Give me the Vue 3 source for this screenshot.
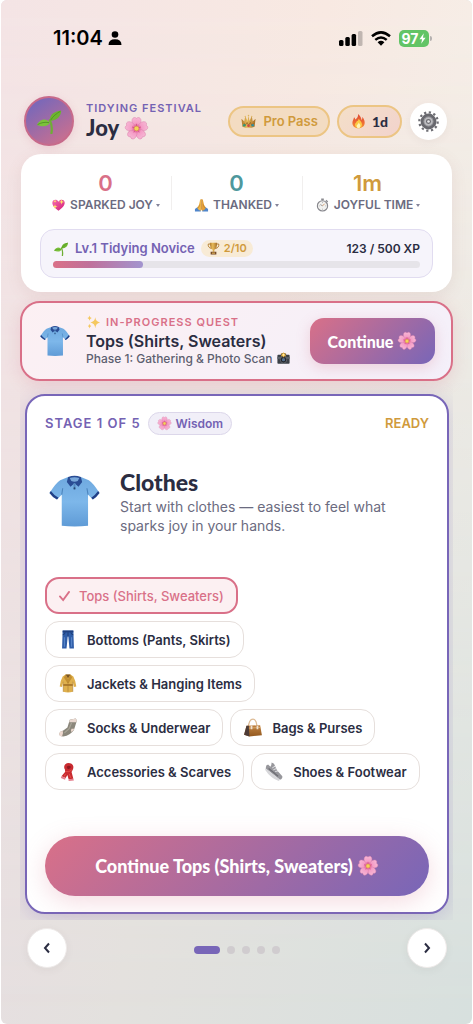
<script setup>
import { computed, ref } from 'vue'

const stats = [
  { value: '0', label: 'SPARKED JOY', icon: 'heart', tone: 'rose' },
  { value: '0', label: 'THANKED', icon: 'hands', tone: 'teal' },
  { value: '1m', label: 'JOYFUL TIME', icon: 'watch', tone: 'gold' },
]

const xp = 123
const xpGoal = 500
const xpWidth = computed(() => `${(xp / xpGoal) * 100}%`)

const items = [
  { label: 'Tops (Shirts, Sweaters)', icon: null },
  { label: 'Bottoms (Pants, Skirts)', icon: 'jeans' },
  { label: 'Jackets & Hanging Items', icon: 'coat' },
  { label: 'Socks & Underwear', icon: 'socks' },
  { label: 'Bags & Purses', icon: 'bag' },
  { label: 'Accessories & Scarves', icon: 'scarf' },
  { label: 'Shoes & Footwear', icon: 'shoe' },
]
const selected = ref(0)
const stage = ref(1)
</script>

<template>
  <div class="page">
    <svg class="sprite" aria-hidden="true">
      <defs>
        <radialGradient id="petal" gradientUnits="userSpaceOnUse" cx="16" cy="16" r="15">
          <stop offset="0.15" stop-color="#e0558f" />
          <stop offset="0.45" stop-color="#f49cc6" />
          <stop offset="1" stop-color="#f7b9d6" />
        </radialGradient>
        <linearGradient id="shirt" x1="0" y1="0" x2="0" y2="1">
          <stop offset="0" stop-color="#6fa9df" />
          <stop offset="0.5" stop-color="#7db7ea" />
          <stop offset="1" stop-color="#5f9bd6" />
        </linearGradient>
        <linearGradient id="heartpink" x1="0" y1="0" x2="1" y2="1">
          <stop offset="0" stop-color="#f46bb0" />
          <stop offset="1" stop-color="#d41f78" />
        </linearGradient>
        <linearGradient id="flame" x1="0" y1="0" x2="0" y2="1">
          <stop offset="0" stop-color="#dd4b35" />
          <stop offset="0.6" stop-color="#ee6a35" />
          <stop offset="1" stop-color="#f49a35" />
        </linearGradient>
        <linearGradient id="goldtone" x1="0" y1="0" x2="1" y2="0">
          <stop offset="0" stop-color="#b07a2c" />
          <stop offset="0.4" stop-color="#e8bb58" />
          <stop offset="1" stop-color="#a56e28" />
        </linearGradient>
        <linearGradient id="leather" x1="0" y1="0" x2="0" y2="1">
          <stop offset="0" stop-color="#c28444" />
          <stop offset="1" stop-color="#93591f" />
        </linearGradient>
      </defs>

      <symbol id="i-flower" viewBox="0 0 32 32">
        <g fill="url(#petal)" stroke="#dc7fab" stroke-width="0.6">
          <path d="M16 16C11.500 12.500 9.500 8 10.500 4.500C11.500 1.500 14 1 16 3C18 1 20.500 1.500 21.500 4.500C22.500 8 20.500 12.500 16 16Z" />
          <path transform="rotate(72 16 16)" d="M16 16C11.500 12.500 9.500 8 10.500 4.500C11.500 1.500 14 1 16 3C18 1 20.500 1.500 21.500 4.500C22.500 8 20.500 12.500 16 16Z" />
          <path transform="rotate(144 16 16)" d="M16 16C11.500 12.500 9.500 8 10.500 4.500C11.500 1.500 14 1 16 3C18 1 20.500 1.500 21.500 4.500C22.500 8 20.500 12.500 16 16Z" />
          <path transform="rotate(216 16 16)" d="M16 16C11.500 12.500 9.500 8 10.500 4.500C11.500 1.500 14 1 16 3C18 1 20.500 1.500 21.500 4.500C22.500 8 20.500 12.500 16 16Z" />
          <path transform="rotate(288 16 16)" d="M16 16C11.500 12.500 9.500 8 10.500 4.500C11.500 1.500 14 1 16 3C18 1 20.500 1.500 21.500 4.500C22.500 8 20.500 12.500 16 16Z" />
        </g>
        <path d="M16 10v6M10.300 14.100l5.700 1.900M12.500 20.900l3.500 -4.900M19.500 20.900l-3.500 -4.900M21.700 14.100l-5.700 1.900" stroke="#cf4a84" stroke-width="0.900" />
        <circle cx="16" cy="16" r="3" fill="#f3d35a" stroke="#d99a4a" stroke-width="0.800" />
      </symbol>

      <symbol id="i-sprout" viewBox="0 0 32 32">
        <path d="M19 31C20 25 19.500 20 17 15" fill="none" stroke="#6fae35" stroke-width="2.800" stroke-linecap="round" />
        <path d="M17.500 16C16 9 22 4 31 3.500C30.500 10 27 15 17.500 16Z" fill="#6db52f" />
        <path d="M17 18.500C14 12.500 6 12 1 20.500C7 23.500 14 23.500 17 18.500Z" fill="#7cc23c" />
        <path d="M18 15C21 10 25 7 30 4M16 18C11 17 6 18 2 20.500" fill="none" stroke="#4c8f22" stroke-width="1" />
      </symbol>

      <symbol id="i-shirt" viewBox="0 0 32 32">
        <path d="M12 1L7 3Q4.500 4.500 0.300 11Q2 13.500 5 15L8 12V31.500Q16 32.500 24.500 31.500V12L27.500 15Q30 13.500 31.700 11Q27.500 4.500 25 3L20 1Q16 3 12 1Z" fill="url(#shirt)" />
        <path d="M0.300 11L1.200 9.700Q3 12.300 6 14L5 15Q2 13.500 0.300 11ZM31.700 11L30.800 9.700Q29 12.300 26.500 14L27.500 15Q30 13.500 31.700 11Z" fill="#213f86" />
        <path d="M8 12L8.600 8M24.500 12L23.800 8" stroke="#4c85be" stroke-width="0.700" />
        <path d="M12 1Q16 -0.800 20 1L20.800 4L18.500 7L16 4.800L13.500 7L11.200 4Z" fill="#294c94" />
        <path d="M13 1.500Q16 0.600 19 1.500L18 3.500Q16 4.300 14 3.500Z" fill="#79a8da" />
        <path d="M16 4.800V9" stroke="#5489c0" stroke-width="1.200" />
        <circle cx="16" cy="8" r="0.600" fill="#26466f" />
      </symbol>

      <symbol id="i-heart" viewBox="0 0 32 32">
        <path d="M16 29C8 23 1 17 2 9.500C3.500 3 12 2 16 8.500C20 2 28.500 3 30 9.500C31 17 24 23 16 29Z" fill="url(#heartpink)" />
        <g fill="#ffe16b">
          <path d="M23 3L24.500 7.500L29 9L24.500 10.500L23 15L21.500 10.500L17 9L21.500 7.500Z" />
          <path d="M8 14L9.500 18L13.500 19.500L9.500 21L8 25L6.500 21L2.500 19.500L6.500 18Z" />
          <path d="M8 4L9 6.500L11.500 7.500L9 8.500L8 11L7 8.500L4.500 7.500L7 6.500Z" />
        </g>
      </symbol>

      <symbol id="i-hands" viewBox="0 0 32 32">
        <path d="M1 25L8 20L15 29L14 31H1ZM31 25L24 20L17 29L18 31H31Z" fill="#4f86cc" />
        <path d="M15.500 2C13 2 12.500 4 12 8L10 16L6 22Q9 29 15 29L16 24Z" fill="#eeb549" />
        <path d="M16.500 2C19 2 19.500 4 20 8L22 16L26 22Q23 29 17 29L16 24Z" fill="#e3a13b" />
        <path d="M16 3V27M12 15Q11 20 8 23M20 15Q21 20 24 23" fill="none" stroke="#b97522" stroke-width="1.200" />
      </symbol>

      <symbol id="i-watch" viewBox="0 0 32 32">
        <path d="M13 1H19V5H13ZM25 4L29 8L27 10L23 6Z" fill="#8b8b90" />
        <circle cx="16" cy="18" r="13" fill="#85858b" />
        <circle cx="16" cy="18" r="10.500" fill="#f2f2f0" />
        <path d="M16 9.500V11.500M16 24.500V26.500M7.500 18H9.500M22.500 18H24.500" stroke="#777" stroke-width="1.200" />
        <path d="M16 18L21 13" stroke="#c8752f" stroke-width="1.500" />
        <path d="M16 18L11 15" stroke="#55555a" stroke-width="1.300" />
      </symbol>

      <symbol id="i-trophy" viewBox="0 0 32 32">
        <path d="M8 5H3Q2 14 11 16M24 5H29Q30 14 21 16" fill="none" stroke="#b07a2c" stroke-width="2.200" />
        <path d="M7 2H25Q25 17 18 19V24H14V19Q7 17 7 2Z" fill="url(#goldtone)" />
        <path d="M9 24H23V31H9Z" fill="#6f4324" />
        <path d="M12 26H20V29H12Z" fill="#dcb158" />
      </symbol>

      <symbol id="i-crown" viewBox="0 0 32 32">
        <path d="M3 27L1 10L7 16L9 5L14 15L16 3L18 15L23 5L25 16L31 10L29 27Q16 32 3 27Z" fill="url(#goldtone)" />
        <path d="M6 19L9 24L13 18L16 24L20 18L23 24L27 19" fill="none" stroke="#8a5a22" stroke-width="1.500" />
        <circle cx="16" cy="25" r="2.800" fill="#d24545" />
        <circle cx="7" cy="24" r="2.800" fill="#2f9a79" />
        <circle cx="25" cy="24" r="2.800" fill="#2f8fa0" />
        <circle cx="9" cy="5" r="1.500" fill="#dfb65c" />
        <circle cx="23" cy="5" r="1.500" fill="#dfb65c" />
        <circle cx="16" cy="3" r="1.600" fill="#dfb65c" />
      </symbol>

      <symbol id="i-fire" viewBox="0 0 32 32">
        <path d="M15 1C20 5 22 10 22.500 14C24 13 24.500 10 24 7C28 12 30 17 29 22C28 28 22 31.500 16 31.500C9 31.500 3 27 3 20C3 15 6 12 6.500 8C8 9 9 11 9 13C13 10 16 6 15 1Z" fill="url(#flame)" />
        <path d="M16 11C19 15 24 18 23.500 24C23 28.500 19.500 31 16 31C11.500 31 8.500 28 8.500 24C8.500 20 12 19 12.500 16C14.500 16 16 14 16 11Z" fill="#fbc944" />
        <path d="M16.500 19C18 22 20.500 23 20 27C19.500 29.500 18 31 16 31C13.500 31 12 29 12 26.500C12 24 15.500 23 16.500 19Z" fill="#fff4b8" />
      </symbol>

      <symbol id="i-gear" viewBox="0 0 32 32">
        <circle cx="16" cy="16" r="14" fill="none" stroke="#6f6f75" stroke-width="3.400" stroke-dasharray="3.400 3.930" />
        <circle cx="16" cy="16" r="9.800" fill="#9c9ca1" stroke="#68686e" stroke-width="4.500" />
        <circle cx="16" cy="16" r="7" fill="#bdbdc1" stroke="#85858a" stroke-width="1" />
        <circle cx="16" cy="16" r="3.800" fill="#6b6b70" />
        <circle cx="16" cy="16" r="2" fill="#e8e8ea" />
      </symbol>

      <symbol id="i-sparkles" viewBox="0 0 32 32">
        <g fill="#f5c860">
          <path d="M20 5Q21 15 31 17Q21 19 20 30Q19 19 9 17Q19 15 20 5Z" />
          <path d="M7 1Q7.500 6 12 7Q7.500 8 7 13Q6.500 8 2 7Q6.500 6 7 1Z" />
          <path d="M7 20Q7.500 24 11 25Q7.500 26 7 31Q6.500 26 3 25Q6.500 24 7 20Z" />
        </g>
      </symbol>

      <symbol id="i-camera" viewBox="0 0 32 32">
        <path d="M1 9Q1 7 3 7H9L11 3H21L23 7H29Q31 7 31 9V27Q31 29 29 29H3Q1 29 1 27Z" fill="#3b3f46" />
        <path d="M1 12H31V17H1Z" fill="#5b6068" />
        <circle cx="16" cy="19" r="8" fill="#23262b" stroke="#81868e" stroke-width="1.300" />
        <circle cx="16" cy="19" r="4" fill="#566e8c" />
        <path d="M16 0L18 4L23 3L20 7L23 11L18 10L16 14L14 10L9 11L12 7L9 3L14 4Z" fill="#f3b83f" />
        <circle cx="16" cy="7" r="2.200" fill="#fff2b5" />
      </symbol>

      <symbol id="i-jeans" viewBox="0 0 32 32">
        <path d="M7 1H25L26 31H18.500L16.500 11H15.500L13.500 31H6Z" fill="#2f5da8" />
        <path d="M7 1H25V4H7Z" fill="#1e3f7f" />
        <path d="M16 4V11M7 8Q11 8 11 4M25 8Q21 8 21 4" fill="none" stroke="#183469" stroke-width="1.200" />
        <path d="M10 12V28M22 12V28" stroke="#5583c7" stroke-width="2" />
      </symbol>

      <symbol id="i-coat" viewBox="0 0 32 32">
        <path d="M12 1H20L25 4Q29 11 30 21L26 22L24 13V30Q16 32 8 30V13L6 22L2 21Q3 11 7 4Z" fill="#dfb04d" />
        <path d="M12 1L16 9L20 1L23 6L17 15H15L9 6Z" fill="#c28f32" />
        <path d="M8 17H24V20H8Z" fill="#a8762a" />
        <path d="M16 13V30M8 13V30M24 13V30" stroke="#ab7c2e" stroke-width="1" />
        <path d="M12 1H20L16 7Z" fill="#7a5423" />
      </symbol>

      <symbol id="i-socks" viewBox="0 0 32 32">
        <path d="M19 3L29 1L31 4L26 20Q20 29 8 31Q1 31 1 26Q2 23 8 21L15 16Z" fill="#8b877b" />
        <path d="M19 3L29 1L31 4L30 7L18 7Z" fill="#e9d8d0" />
        <path d="M1 26Q2 23 7 21.500Q9 26 6 31Q1 31 1 26ZM27 18L22 24Q20 20 22 18Z" fill="#eed9d0" />
        <path d="M22 8L18 18L10 25" fill="none" stroke="#a8a497" stroke-width="2" />
      </symbol>

      <symbol id="i-bag" viewBox="0 0 32 32">
        <path d="M8 17Q9 2 16 2Q22 2 23 17" fill="none" stroke="#ddbb95" stroke-width="2.200" />
        <path d="M5 13L28 12L31 29L10 31L1 28Z" fill="url(#leather)" />
        <path d="M5 13L1 28L10 31L9 13Z" fill="#4c3b37" />
        <path d="M9 17L29 16" stroke="#e2b879" stroke-width="1.300" />
        <path d="M12 13H15V19H12ZM22 13H25V19H22Z" fill="#eee0d0" />
      </symbol>

      <symbol id="i-scarf" viewBox="0 0 32 32">
        <path d="M11 13Q8 8 11 4Q16 0 22 3Q27 7 24 13L22 17L25 28L17 29L15 22L12 27L5 24L11 17Z" fill="#c92b30" />
        <path d="M14 8Q17 5 21 8Q20 11 17 12Q13 11 14 8Z" fill="#8e1820" />
        <path d="M11 16Q18 18 23 13M12 20L9 25M18 20L21 27" fill="none" stroke="#e5534f" stroke-width="1.400" />
        <path d="M5 24L12 27L11 30L4 27ZM17 29L25 28L26 31L17 32Z" fill="#e47e8d" />
      </symbol>

      <symbol id="i-shoe" viewBox="0 0 32 32">
        <path d="M3 6L6 4L10 8Q12 5 12 1L16 3L21 14L30 24Q31 28 26 30L2 11Z" fill="#97979c" />
        <path d="M2 11L26 30L24 32Q10 27 1 13Z" fill="#d7d7da" />
        <path d="M13 10L18 7M15 13L20 11M18 16L23 15" stroke="#ececef" stroke-width="1.500" />
        <path d="M7 11L23 24" stroke="#6d6d73" stroke-width="2" />
      </symbol>
    </svg>

    <div class="statusbar">
      <span class="clock">11:04</span>
      <svg class="person" viewBox="0 0 14 14" aria-hidden="true">
        <circle cx="7" cy="3.500" r="3.300" />
        <path d="M0.500 14Q0.500 8.200 7 8.200Q13.500 8.200 13.500 14Z" />
      </svg>
      <svg class="signal" viewBox="0 0 24 15" aria-hidden="true">
        <rect x="0" y="9" width="4.500" height="6" rx="1.500" />
        <rect x="6.300" y="6" width="4.500" height="9" rx="1.500" />
        <rect x="12.600" y="3" width="4.500" height="12" rx="1.500" />
        <rect x="19" y="0" width="4.500" height="15" rx="1.500" opacity="0.22" />
      </svg>
      <svg class="wifi" viewBox="0 0 20 15" aria-hidden="true">
        <g fill="none" stroke="#000" stroke-width="2.500">
          <path d="M1 5.300Q10 -2.500 19 5.300" />
          <path d="M4.300 8.900Q10 4 15.700 8.900" />
        </g>
        <path d="M10 14.700L6.600 11.200Q10 8.500 13.400 11.200Z" />
      </svg>
      <span class="battery">97<svg viewBox="0 0 8 12" aria-hidden="true"><path d="M5.500 0L0.500 6.800H3.500L2.500 12L7.500 5H4.500Z" fill="#fff" /></svg></span>
    </div>

    <header class="topbar">
      <div class="avatar"><svg><use href="#i-sprout" /></svg></div>
      <div class="who">
        <span class="eyebrow">TIDYING FESTIVAL</span>
        <h1>Joy <svg><use href="#i-flower" /></svg></h1>
      </div>
      <button class="pill pro" type="button"><svg><use href="#i-crown" /></svg>Pro Pass</button>
      <button class="pill streak" type="button"><svg><use href="#i-fire" /></svg>1d</button>
      <button class="gear" type="button" aria-label="Settings"><svg><use href="#i-gear" /></svg></button>
    </header>

    <section class="stats">
      <div class="columns">
        <button v-for="s in stats" :key="s.label" type="button" class="stat">
          <span class="value" :class="s.tone">{{ s.value }}</span>
          <span class="label"><svg><use :href="`#i-${s.icon}`" /></svg>{{ s.label }}<i class="caret"></i></span>
        </button>
      </div>
      <div class="level">
        <div class="level-row">
          <svg><use href="#i-sprout" /></svg>
          <span class="level-name">Lv.1 Tidying Novice</span>
          <span class="trophies"><svg><use href="#i-trophy" /></svg>2/10</span>
          <span class="xp">{{ xp }} / {{ xpGoal }} XP</span>
        </div>
        <div class="track" role="progressbar" aria-label="Experience" :aria-valuenow="xp" :aria-valuemax="xpGoal">
          <div class="fill" :style="{ width: xpWidth }"></div>
        </div>
      </div>
    </section>

    <section class="quest">
      <svg class="quest-icon"><use href="#i-shirt" /></svg>
      <div class="quest-text">
        <span class="quest-eyebrow"><svg><use href="#i-sparkles" /></svg>IN-PROGRESS QUEST</span>
        <h2>Tops (Shirts, Sweaters)</h2>
        <p>Phase 1: Gathering &amp; Photo Scan <svg><use href="#i-camera" /></svg></p>
      </div>
      <button class="go" type="button">Continue<svg><use href="#i-flower" /></svg></button>
    </section>

    <main class="carousel">
      <article class="stage">
        <div class="stage-head">
          <span class="stage-no">STAGE 1 OF 5</span>
          <span class="wisdom"><svg><use href="#i-flower" /></svg>Wisdom</span>
          <span class="ready">READY</span>
        </div>
        <div class="intro">
          <svg><use href="#i-shirt" /></svg>
          <div>
            <h2>Clothes</h2>
            <p>Start with clothes — easiest to feel what sparks joy in your hands.</p>
          </div>
        </div>
        <div class="chips">
          <button
            v-for="(item, i) in items"
            :key="item.label"
            type="button"
            class="chip"
            :class="{ active: i === selected }"
            @click="selected = i"
          >
            <svg v-if="item.icon"><use :href="`#i-${item.icon}`" /></svg>
            <svg v-else class="check" viewBox="0 0 12 12"><path d="M1 6.500L4.500 10.500L11 1.500" /></svg>
            {{ item.label }}
          </button>
        </div>
        <button class="cta" type="button">Continue Tops (Shirts, Sweaters)<svg><use href="#i-flower" /></svg></button>
      </article>
    </main>

    <nav class="pager" aria-label="Stages">
      <button class="arrow" type="button" aria-label="Previous stage">
        <svg viewBox="0 0 8 12"><path d="M6 1.500L2 6L6 10.500" /></svg>
      </button>
      <div class="dots">
        <button
          v-for="n in 5"
          :key="n"
          type="button"
          class="dot"
          :class="{ on: n === stage }"
          :aria-label="`Stage ${n}`"
          @click="stage = n"
        ></button>
      </div>
      <button class="arrow" type="button" aria-label="Next stage">
        <svg viewBox="0 0 8 12"><path d="M2 1.500L6 6L2 10.500" /></svg>
      </button>
    </nav>
  </div>
</template>

<style>
body {
  background: #fff;
}
</style>

<style scoped>
.page,
.page * {
  box-sizing: border-box;
}
.page {
  position: relative;
  isolation: isolate;
  overflow: hidden;
  min-height: 100vh;
  margin: 0 1px;
  padding: 0 19px;
  border-radius: 6px;
  background: linear-gradient(100deg, #eadde3, #e3e1de 45%, #d7e0de);
  font-family: Inter, "Liberation Sans", sans-serif;
  color: #2b2d42;
}
.page::before {
  content: "";
  position: absolute;
  inset: 0;
  z-index: -1;
  background: linear-gradient(100deg, #f4e4e5, #f8e9e2 50%, #f4f2eb);
  mask-image: linear-gradient(#000, transparent);
}
.sprite {
  position: absolute;
  width: 0;
  height: 0;
}
svg {
  flex: none;
  overflow: visible;
}
button {
  font: inherit;
  color: inherit;
  border: 0;
  padding: 0;
  background: none;
  cursor: pointer;
}
h1,
h2,
p {
  margin: 0;
}

/* status bar */
.statusbar {
  display: flex;
  align-items: center;
  height: 76px;
  padding: 0 24px 0 33px;
  color: #000;
}
.clock {
  font-size: 20px;
  font-weight: 600;
}
.person {
  width: 14px;
  height: 14px;
  margin-left: 5px;
}
.signal {
  width: 24px;
  height: 15px;
  margin-left: auto;
}
.wifi {
  width: 20px;
  height: 15px;
  margin: 0 8px;
}
.battery {
  position: relative;
  display: flex;
  align-items: center;
  justify-content: center;
  gap: 1px;
  width: 30px;
  height: 17px;
  border-radius: 5px;
  background: #62c466;
  color: #fff;
  font-size: 14px;
  font-weight: 700;
}
.battery svg {
  width: 7px;
  height: 11px;
}
.battery::after {
  content: "";
  position: absolute;
  right: -3px;
  top: 6px;
  width: 2px;
  height: 5px;
  border-radius: 0 2px 2px 0;
  background: #b5b1b0;
}

/* header */
.topbar {
  display: flex;
  align-items: center;
  margin-top: 20px;
  padding: 0 6px 0 4px;
}
.avatar {
  display: grid;
  place-items: center;
  width: 50px;
  height: 50px;
  border: 2px solid #c76a8b;
  border-radius: 50%;
  background: linear-gradient(145deg, #7b68b8 15%, #d4708a);
  box-shadow: 0 2px 8px rgba(212, 112, 138, 0.2);
}
.avatar svg {
  width: 26px;
  height: 26px;
}
.who {
  margin-left: 12px;
  margin-right: auto;
}
.eyebrow {
  display: block;
  font-size: 11px;
  line-height: 14px;
  font-weight: 600;
  letter-spacing: 1px;
  color: #7462b3;
  white-space: nowrap;
}
h1 {
  display: flex;
  align-items: center;
  gap: 5px;
  font-family: Lato, sans-serif;
  font-size: 22px;
  line-height: 26px;
  font-weight: 900;
}
h1 svg {
  width: 25px;
  height: 25px;
}
.pill {
  display: flex;
  align-items: center;
  justify-content: center;
  border: 2px solid #ecc584;
  border-radius: 17px;
  white-space: nowrap;
}
.pro {
  gap: 6px;
  height: 31px;
  padding: 0 10px;
  background: #f3dcc2;
  color: #d09a3c;
  font-size: 13px;
  font-weight: 600;
}
.pro svg {
  width: 17px;
  height: 15px;
}
.streak {
  gap: 6px;
  height: 33px;
  margin: 0 8px 0 7px;
  padding: 0 12px;
  background: linear-gradient(135deg, #f4dfc8, #f2d3cd);
  font-family: Lato, sans-serif;
  font-size: 14px;
  font-weight: 900;
}
.streak svg {
  width: 15px;
  height: 18px;
}
.gear {
  display: grid;
  place-items: center;
  width: 37px;
  height: 37px;
  border-radius: 50%;
  background: #fff;
  box-shadow: 0 2px 8px rgba(80, 60, 60, 0.06);
}
.gear svg {
  width: 21px;
  height: 21px;
}

/* statistics */
.stats {
  margin: 8px 1px 0;
  padding: 15px 19px 14px;
  border-radius: 20px;
  background: #fff;
  box-shadow: 0 4px 16px rgba(150, 90, 90, 0.1);
}
.columns {
  display: grid;
  grid-template-columns: 1fr 1fr 1fr;
}
.stat {
  position: relative;
  display: flex;
  flex-direction: column;
  align-items: center;
  height: 60px;
}
.stat + .stat::before {
  content: "";
  position: absolute;
  left: 0;
  top: 7px;
  width: 1px;
  height: 34px;
  background: #f1efee;
}
.value {
  font-size: 22px;
  line-height: 28px;
  font-weight: 600;
}
.rose {
  color: #d97088;
}
.teal {
  color: #4e989d;
}
.gold {
  color: #d09a3c;
}
.label {
  display: flex;
  align-items: center;
  font-size: 12px;
  line-height: 16px;
  font-weight: 600;
  color: #6b6b80;
  white-space: nowrap;
}
.label svg {
  width: 15px;
  height: 14px;
  margin-right: 4px;
}
.caret {
  margin-left: 3px;
  border: 2px solid transparent;
  border-top: 3px solid #85859a;
  border-bottom: 0;
}
.level {
  padding: 8px 12px 9px;
  border: 1px solid #e1dcf0;
  border-radius: 14px;
  background: #f6f4fb;
}
.level-row {
  display: flex;
  align-items: center;
  height: 20px;
  white-space: nowrap;
}
.level-row > svg {
  width: 16px;
  height: 15px;
  margin-right: 6px;
}
.level-name {
  font-size: 13px;
  font-weight: 600;
  color: #7462b3;
}
.trophies {
  display: flex;
  align-items: center;
  gap: 4px;
  height: 17px;
  margin-left: 6px;
  padding: 0 6px;
  border-radius: 9px;
  background: #f8ebd6;
  color: #d09a3c;
  font-size: 11px;
  font-weight: 600;
}
.trophies svg {
  width: 13px;
  height: 13px;
}
.xp {
  margin-left: auto;
  font-size: 12px;
  font-weight: 600;
}
.track {
  height: 7px;
  margin-top: 3px;
  border-radius: 4px;
  background: #e6e4e9;
}
.fill {
  height: 100%;
  border-radius: 4px;
  background: linear-gradient(90deg, #da7188, #c0709a 40%, #a294cf);
}

/* current quest */
.quest {
  display: flex;
  align-items: center;
  min-height: 80px;
  margin-top: 9px;
  padding: 0 16px 0 18px;
  border: 2px solid #d97088;
  border-radius: 20px;
  background: linear-gradient(135deg, #fcf0f3, #f4f0fa);
  box-shadow: 0 4px 16px rgba(217, 112, 136, 0.2);
}
.quest-icon {
  width: 30px;
  height: 30px;
}
.quest-text {
  margin: 0 auto 2px 16px;
  white-space: nowrap;
}
.quest-eyebrow {
  display: flex;
  align-items: center;
  gap: 5px;
  font-size: 11px;
  line-height: 17px;
  font-weight: 600;
  letter-spacing: 1px;
  color: #d97088;
}
.quest-eyebrow svg {
  width: 15px;
  height: 14px;
}
.quest h2 {
  font-size: 16px;
  line-height: 20px;
  font-weight: 600;
}
.quest p {
  display: flex;
  align-items: center;
  gap: 3px;
  font-size: 12px;
  line-height: 16px;
  font-weight: 500;
  color: #5d5f70;
}
.quest p svg {
  width: 15px;
  height: 13px;
}
.go {
  display: flex;
  align-items: center;
  justify-content: center;
  gap: 4px;
  width: 125px;
  height: 46px;
  border-radius: 14px;
  background: linear-gradient(135deg, #d97088, #7866b8);
  box-shadow: 0 4px 14px rgba(217, 112, 136, 0.25);
  color: #fff;
  font-family: Lato, sans-serif;
  font-size: 16px;
  font-weight: 900;
}
.go svg {
  width: 20px;
  height: 20px;
}

/* stage card */
.carousel {
  padding: 13px 4px 6px 5px;
  overflow: hidden;
}
.stage {
  padding: 15px 18px 16px;
  border: 2px solid #7866b8;
  border-radius: 20px;
  background: #fff;
  box-shadow: 0 4px 20px rgba(120, 102, 184, 0.25);
}
.stage-head {
  display: flex;
  align-items: center;
  height: 24px;
}
.stage-no {
  font-size: 13px;
  font-weight: 600;
  letter-spacing: 1px;
  color: #7462b3;
}
.wisdom {
  display: flex;
  align-items: center;
  gap: 4px;
  height: 23px;
  margin-left: 7px;
  padding: 0 8px;
  border: 1px solid #dcd7ea;
  border-radius: 12px;
  background: #f1eff8;
  color: #7462b3;
  font-size: 12px;
  font-weight: 600;
}
.wisdom svg {
  width: 15px;
  height: 15px;
}
.ready {
  margin-left: auto;
  font-size: 13px;
  font-weight: 600;
  color: #d09a3c;
}
.intro {
  display: flex;
  align-items: center;
  gap: 20px;
  margin-top: 32px;
  padding-left: 4px;
}
.intro > svg {
  width: 51px;
  height: 52px;
}
.intro h2 {
  font-family: Lato, sans-serif;
  font-size: 23px;
  line-height: 30px;
  font-weight: 900;
}
.intro p {
  font-size: 14px;
  line-height: 19px;
  color: #6b6b80;
}
.chips {
  display: flex;
  flex-wrap: wrap;
  gap: 7px;
  margin-top: 42px;
}
.chip {
  display: flex;
  align-items: center;
  gap: 9px;
  height: 37px;
  padding: 0 12px;
  border: 1px solid #e6dfdc;
  border-radius: 14px;
  background: #fff;
  font-size: 13px;
  font-weight: 600;
  white-space: nowrap;
}
.chip svg {
  width: 20px;
  height: 19px;
}
.chip.active {
  border: 2px solid #d97088;
  background: #fcf0f2;
  color: #d97088;
  font-weight: 500;
}
.chip .check {
  width: 11px;
  height: 12px;
  fill: none;
  stroke: #d97088;
  stroke-width: 2;
  stroke-linecap: round;
}
.cta {
  display: flex;
  align-items: center;
  justify-content: center;
  gap: 4px;
  width: 100%;
  height: 60px;
  margin-top: 46px;
  border-radius: 30px;
  background: linear-gradient(135deg, #d97088, #7866b8);
  box-shadow: 0 6px 24px rgba(217, 112, 136, 0.25);
  color: #fff;
  font-family: Lato, sans-serif;
  font-size: 18px;
  font-weight: 900;
  white-space: nowrap;
}
.cta svg {
  width: 22px;
  height: 22px;
}

/* pager */
.pager {
  display: flex;
  align-items: center;
  justify-content: space-between;
  margin-top: 8px;
  padding: 0 6px 0 7px;
}
.arrow {
  display: grid;
  place-items: center;
  width: 40px;
  height: 40px;
  border: 1px solid #eeeae9;
  border-radius: 50%;
  background: #fff;
  box-shadow: 0 2px 8px rgba(80, 60, 60, 0.06);
}
.arrow svg {
  width: 8px;
  height: 12px;
  fill: none;
  stroke: #2b2d42;
  stroke-width: 2;
}
.dots {
  display: flex;
  gap: 7px;
  padding-top: 4px;
}
.dot {
  width: 8px;
  height: 8px;
  border-radius: 4px;
  background: #d0cccf;
}
.dot.on {
  width: 26px;
  background: #7866b8;
}
</style>
